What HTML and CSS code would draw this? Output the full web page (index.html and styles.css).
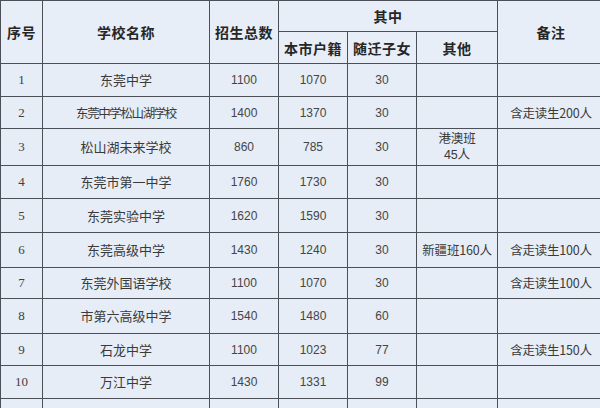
FILE: index.html
```html
<!DOCTYPE html>
<html lang="zh-CN">
<head>
<meta charset="utf-8">
<title>招生计划</title>
<link rel="stylesheet" href="styles.css">
</head>
<body>
<div class="wrap">
<table class="plan">
  <colgroup>
    <col class="c-no"><col class="c-name"><col class="c-total"><col class="c-local"><col class="c-follow"><col class="c-other"><col class="c-note">
  </colgroup>
  <thead>
    <tr class="h1">
      <th rowspan="2">序号</th>
      <th rowspan="2">学校名称</th>
      <th rowspan="2">招生总数</th>
      <th colspan="3">其中</th>
      <th rowspan="2">备注</th>
    </tr>
    <tr class="h2">
      <th>本市户籍</th>
      <th>随迁子女</th>
      <th>其他</th>
    </tr>
  </thead>
  <tbody>
    <tr class="r33"><td class="no">1</td><td class="name">东莞中学</td><td class="num">1100</td><td class="num">1070</td><td class="num">30</td><td></td><td></td></tr>
    <tr class="r32"><td class="no">2</td><td class="name tight">东莞中学松山湖学校</td><td class="num">1400</td><td class="num">1370</td><td class="num">30</td><td></td><td class="note">含走读生200人</td></tr>
    <tr class="r37"><td class="no">3</td><td class="name">松山湖未来学校</td><td class="num">860</td><td class="num">785</td><td class="num">30</td><td class="note two"><span class="ln">港澳班</span><span class="ln">45人</span></td><td></td></tr>
    <tr class="r33"><td class="no">4</td><td class="name">东莞市第一中学</td><td class="num">1760</td><td class="num">1730</td><td class="num">30</td><td></td><td></td></tr>
    <tr class="r34"><td class="no">5</td><td class="name">东莞实验中学</td><td class="num">1620</td><td class="num">1590</td><td class="num">30</td><td></td><td></td></tr>
    <tr class="r35"><td class="no">6</td><td class="name">东莞高级中学</td><td class="num">1430</td><td class="num">1240</td><td class="num">30</td><td class="note">新疆班160人</td><td class="note">含走读生100人</td></tr>
    <tr class="r31"><td class="no">7</td><td class="name">东莞外国语学校</td><td class="num">1100</td><td class="num">1070</td><td class="num">30</td><td></td><td class="note">含走读生100人</td></tr>
    <tr class="r35"><td class="no">8</td><td class="name">市第六高级中学</td><td class="num">1540</td><td class="num">1480</td><td class="num">60</td><td></td><td></td></tr>
    <tr class="r32"><td class="no">9</td><td class="name">石龙中学</td><td class="num">1100</td><td class="num">1023</td><td class="num">77</td><td></td><td class="note">含走读生150人</td></tr>
    <tr class="r33"><td class="no">10</td><td class="name">万江中学</td><td class="num">1430</td><td class="num">1331</td><td class="num">99</td><td></td><td></td></tr>
    <tr class="r33"><td class="no"></td><td class="name"></td><td class="num"></td><td class="num"></td><td class="num"></td><td></td><td></td></tr>
  </tbody>
</table>
</div>
</body>
</html>
```

FILE: styles.css
```css
html, body {
  margin: 0;
  padding: 0;
  background: #e6edf6;
}
.wrap {
  width: 600px;
  height: 408px;
  overflow: hidden;
}
.plan {
  border-collapse: collapse;
  table-layout: fixed;
  width: 604px;
  background: #e6edf6;
  color: #3a3a3a;
  font-family: "Noto Sans CJK SC", "Liberation Sans", sans-serif;
}
.c-no { width: 42px; }
.c-name { width: 167px; }
.c-total { width: 69px; }
.c-local { width: 69px; }
.c-follow { width: 69px; }
.c-other { width: 81px; }
.c-note { width: 107px; }

.plan th, .plan td {
  border: 1px solid #4c4f55;
  padding: 0;
  text-align: center;
  vertical-align: middle;
  overflow: hidden;
  white-space: nowrap;
}
.plan th {
  font-size: 14px;
  font-weight: 700;
  color: #262626;
  background: #e8eef7;
  letter-spacing: 0.5px;
}
.h1 th { height: 30px; }
.h2 th { height: 31px; }
.plan td {
  font-size: 13px;
  font-weight: 400;
  line-height: 16px;
}
.plan td.no {
  font-family: "Liberation Serif", serif;
  font-size: 13px;
  color: #404040;
}
.plan td.num {
  font-family: "Liberation Sans", sans-serif;
  font-size: 12px;
  color: #454545;
}
.plan td.name { letter-spacing: 0; }
.plan td.tight { font-size: 12.5px; letter-spacing: -1.4px; }
.plan td.note { white-space: nowrap; font-size: 12.5px; letter-spacing: -0.2px; }
.plan td.two {
  font-family: "Liberation Sans", "Noto Sans CJK SC", sans-serif;
  font-size: 12.5px;
}
.plan td.two .ln {
  display: block;
  line-height: 16px;
  height: 16px;
}

.r31 td { height: 30px; }
.r32 td { height: 31px; }
.r33 td { height: 32px; }
.r34 td { height: 33px; }
.r35 td { height: 34px; }
.r37 td { height: 36px; }
```
